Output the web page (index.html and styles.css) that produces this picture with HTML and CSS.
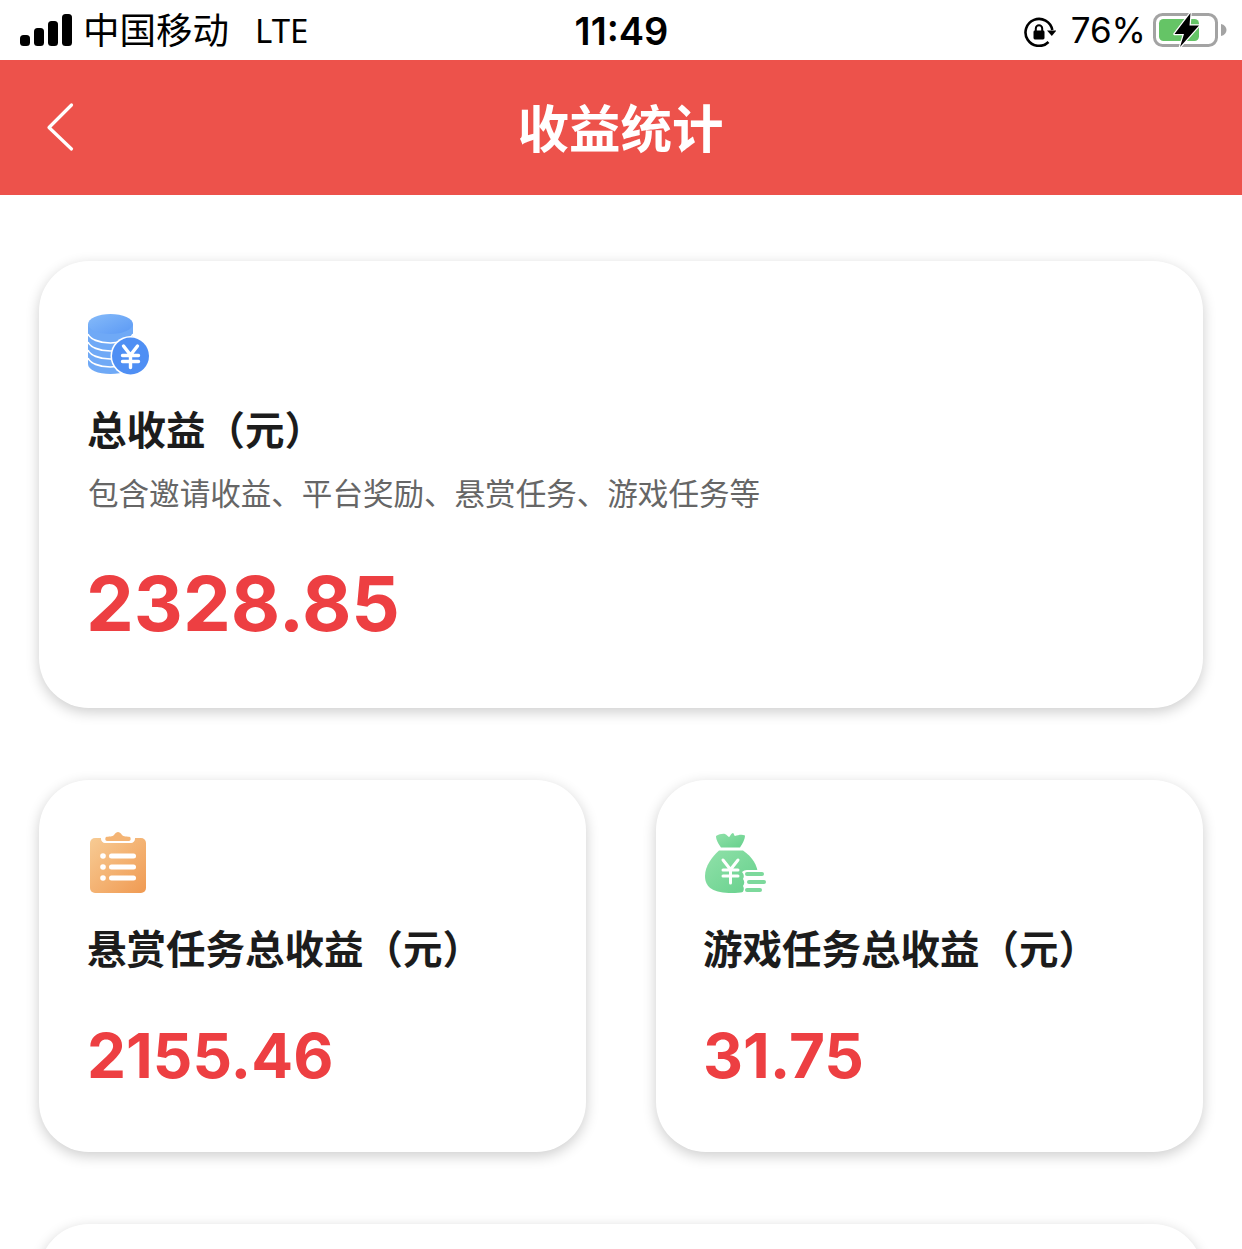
FILE: index.html
```html
<!DOCTYPE html>
<html lang="zh-CN">
<head>
<meta charset="utf-8">
<title>收益统计</title>
<link rel="stylesheet" href="styles.css">
</head>
<body>
<div class="page">
  <header class="status">
    <div class="status-left">
      <svg class="signal" width="52" height="32" viewBox="0 0 52 32"><rect x="0" y="21" width="10" height="11" rx="3.5"/><rect x="14" y="14" width="10" height="18" rx="3.5"/><rect x="28" y="7" width="10" height="25" rx="3.5"/><rect x="42" y="0" width="10" height="32" rx="3.5"/></svg>
      <span class="carrier">中国移动</span>
      <span class="lte">LTE</span>
    </div>
    <div class="clock">11:49</div>
    <div class="status-right">
      <svg class="lock" width="32" height="30" viewBox="0 0 32 30"><path d="M24.5 25A13.500 13.500 0 1 1 28.300 13" fill="none" stroke="#000" stroke-width="2.600"/><path d="M23 13.500h9.500l-4.700 5.500z" fill="#000"/><rect x="9.500" y="13.500" width="11" height="9" rx="1.400" fill="#000"/><path d="M11.800 14v-2.500a3.200 3.200 0 0 1 6.400 0V14" fill="none" stroke="#000" stroke-width="2"/></svg>
      <span class="pct">76%</span>
      <svg class="battery" width="76" height="36" viewBox="0 0 76 36"><rect x="2.500" y="2.500" width="62" height="31" rx="8" fill="none" stroke="#a3a3a3" stroke-width="3"/><path d="M69 12c3.500 .8 5.500 3 5.500 6s-2 5.200-5.500 6z" fill="#a3a3a3"/><rect x="7" y="7" width="40" height="22" rx="4.500" fill="#65c466"/><path d="M38.500 1 22.500 22H32L28 35 47 13.500H37.500z" fill="#000" stroke="#fff" stroke-width="2.500" stroke-linejoin="round" paint-order="stroke"/></svg>
    </div>
  </header>
  <nav class="navbar">
    <svg class="back" width="30" height="50" viewBox="0 0 30 50"><path d="M26.500 3 4 25.500 26.500 47" fill="none" stroke="#fff" stroke-width="3.200" stroke-linecap="round" stroke-linejoin="round"/></svg>
    <h1 class="nav-title">收益统计</h1>
  </nav>
  <main class="content">
    <section class="card card-total">
      <svg class="icon" width="63" height="62" viewBox="0 0 63 62">
        <defs>
          <linearGradient id="blue" x1="0" y1="0" x2="1" y2="1"><stop offset="0" stop-color="#86bbf9"/><stop offset="1" stop-color="#5b99f5"/></linearGradient>
        </defs>
        <path d="M0 10v40c0 6 10 10 22.500 10S45 56 45 50V10z" fill="#6fa9f6"/>
        <g fill="none" stroke="#fff" stroke-width="1.700">
          <path d="M0 20c2 5 11 9 22.500 9S43 25 45 20"/>
          <path d="M0 28c2 5 11 9 22.500 9S43 33 45 28"/>
          <path d="M0 36c2 5 11 9 22.500 9S43 41 45 36"/>
          <path d="M0 44c2 5 11 9 22.500 9S43 49 45 44"/>
        </g>
        <ellipse cx="22.500" cy="10" rx="22.500" ry="10" fill="url(#blue)"/>
        <circle cx="42.500" cy="42" r="20" fill="#fff"/>
        <circle cx="42.500" cy="42" r="18.500" fill="#4f8ff4"/>
        <path d="M35.500 32 42.500 41l7-9M34.500 41.500h16M34.500 47.500h16M42.500 41v12.500" fill="none" stroke="#fff" stroke-width="3.400" stroke-linecap="round" stroke-linejoin="round"/>
      </svg>
      <h2 class="card-title">总收益（元）</h2>
      <p class="card-sub">包含邀请收益、平台奖励、悬赏任务、游戏任务等</p>
      <div class="amount amount-lg">2328.85</div>
    </section>
    <div class="card-row">
      <section class="card card-half">
        <svg class="icon" width="60" height="62" viewBox="0 0 60 62">
          <defs>
            <linearGradient id="orange" x1="0" y1="0" x2="1" y2="1"><stop offset="0" stop-color="#f7cb94"/><stop offset="1" stop-color="#f09a52"/></linearGradient>
          </defs>
          <rect x="2" y="6" width="56" height="55" rx="5" fill="url(#orange)"/>
          <path d="M13 6h5c1 0 2-.5 3-1 2-.5 4-1 5-2 1-2 3-3 4-3s3 1 4 3c1 1 3 1.500 5 2 1 .5 2 1 3 1h5v1c0 2-2 4-4 4H17c-2 0-4-2-4-4z" fill="#fff"/>
          <path d="M18 5c2-.5 7-.5 8-2 1-2 3-3 4-3s3 1 4 3c1 1.500 6 1.500 8 2 1 1 1 4-1 4H19c-2 0-2-3-1-4z" fill="#f4b474"/>
          <g fill="#fff"><circle cx="15" cy="24" r="2.800"/><circle cx="15" cy="35" r="2.800"/><circle cx="15" cy="46" r="2.800"/><rect x="21" y="21.500" width="27" height="5" rx="2.500"/><rect x="21" y="32.500" width="27" height="5" rx="2.500"/><rect x="21" y="43.500" width="27" height="5" rx="2.500"/></g>
        </svg>
        <h2 class="card-title">悬赏任务总收益（元）</h2>
        <div class="amount amount-md">2155.46</div>
      </section>
      <section class="card card-half">
        <svg class="icon" width="63" height="62" viewBox="0 0 63 62">
          <defs>
            <linearGradient id="green" x1="0" y1="0" x2="1" y2="1"><stop offset="0" stop-color="#90e1a9"/><stop offset="1" stop-color="#66d08c"/></linearGradient>
          </defs>
          <path d="M12 4c3-1.500 6-2.500 9-2 2 .5 3 3 4 3 1 0 2-4 4-4 1 0 1 3 2 3 3-1 7-2 10-.5 0 4-3 9-5 12H17c-2-3-5-7-5-11.500z" fill="url(#green)"/>
          <path d="M15 18.500h24c9 6 15 15 15 25 0 12-9 17.500-26 17.500C10 61 1 56 1 44c0-10 7-19 14-25.500z" fill="url(#green)"/>
          <path d="M38 40a7 7 0 0 1 5-2h20v23H38a6 6 0 0 0 1-7 6 6 0 0 0 0-7 6 6 0 0 0-1-7z" fill="#fff"/>
          <path d="M19 28l7.500 9.500 7.500-9.500M19 38h15M19 44h15M26.500 37v14" fill="none" stroke="#fff" stroke-width="3" stroke-linecap="round" stroke-linejoin="round"/>
          <g fill="#7dd99c"><rect x="41" y="40" width="19" height="4" rx="2"/><rect x="43" y="48" width="19" height="4" rx="2"/><rect x="41" y="56" width="17" height="4" rx="2"/></g>
        </svg>
        <h2 class="card-title">游戏任务总收益（元）</h2>
        <div class="amount amount-md">31.75</div>
      </section>
    </div>
    <section class="card card-next"></section>
  </main>
</div>
</body>
</html>
```
FILE: styles.css
```css
* { box-sizing: border-box; }
html, body { margin: 0; padding: 0; background: #fff; }
body { font-family: "Inter", "Noto Sans CJK SC", sans-serif; }
.page { width: 1242px; height: 1249px; overflow: hidden; }
.status { height: 60px; display: grid; grid-template-columns: 1fr auto 1fr; align-items: center; padding: 0 14px 0 20px; color: #000; }
.status-left { display: flex; align-items: center; }
.signal { margin-top: -2px; fill: #000; }
.carrier { margin: -4px 0 0 11px; font: 400 36.500px/60px "Noto Sans CJK SC", sans-serif; }
.lte { margin: 1px 0 0 26px; font: 400 33px/60px "Noto Sans", sans-serif; }
.clock { margin: 1px 0 0 -5px; font: 600 38px/60px "Inter", sans-serif; }
.status-right { display: flex; align-items: center; justify-content: flex-end; }
.lock { margin-top: 2px; }
.pct { margin: -1px 0 0 15px; font: 400 35px/60px "Inter", sans-serif; }
.battery { margin: -1px 0 0 6px; }
.navbar { height: 135px; background: #ed524b; display: flex; align-items: center; justify-content: center; position: relative; }
.back { position: absolute; left: 45px; top: 42px; }
.nav-title { margin: -4px 0 0 -1px; font: 600 51.500px/1 "Noto Sans CJK SC", sans-serif; color: #fff; }
.content { padding: 66px 39px 0; display: flex; flex-direction: column; gap: 72px; }
.card { background: #fff; border-radius: 50px; box-shadow: 0 4px 14px rgba(0, 0, 0, .2); padding: 52px 49px 0; }
.card-total { height: 447px; padding-top: 53px; }
.card-row { display: flex; gap: 70px; }
.card-half { width: 547px; height: 372px; }
.card-half:last-child { padding-left: 48px; }
.card-next { height: 100px; }
.icon { display: block; }
.card-title { margin: 25px 0 0 -1px; font: 600 39.500px/56px "Noto Sans CJK SC", sans-serif; color: #1c1c1c; }
.card-total .card-title { margin-top: 24px; }
.card-sub { margin: 13px 0 0; font: 400 30.550px/46px "Noto Sans CJK SC", sans-serif; color: #666; }
.amount { color: #ed3f42; font-family: "Inter", sans-serif; font-weight: 700; }
.amount-lg { margin: 43px 0 0 -2px; font-size: 76px; line-height: 90px; }
.amount-md { margin: 42px 0 0 -1px; font-size: 62px; line-height: 78px; }
```
